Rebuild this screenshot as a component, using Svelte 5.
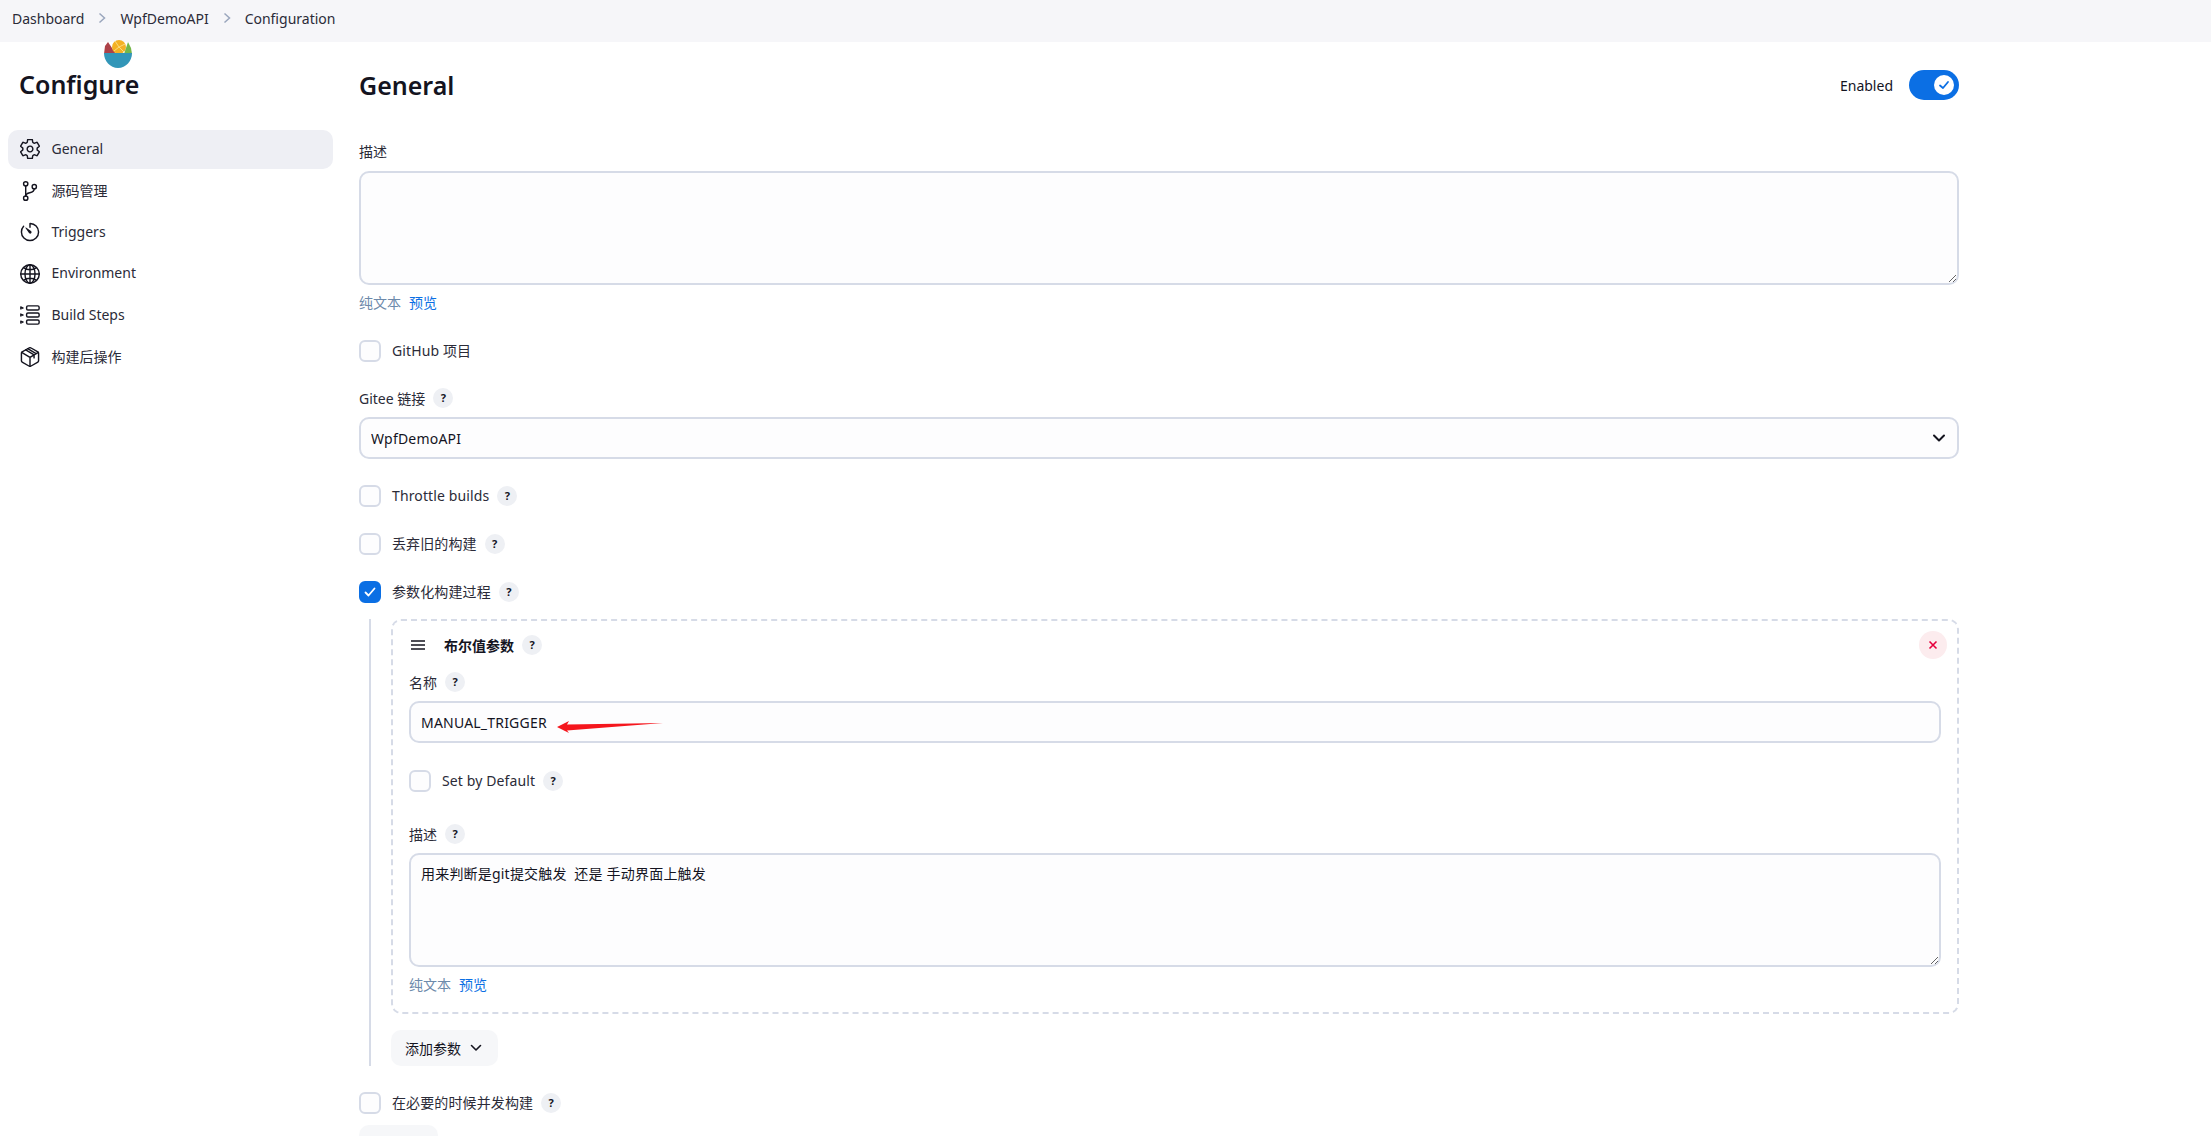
<script>
  const crumbs = ['Dashboard', 'WpfDemoAPI', 'Configuration'];
  const navItems = [
    { label: 'General', icon: 'gear', active: true },
    { label: '源码管理', icon: 'branch' },
    { label: 'Triggers', icon: 'timer' },
    { label: 'Environment', icon: 'globe' },
    { label: 'Build Steps', icon: 'steps' },
    { label: '构建后操作', icon: 'box' }
  ];
</script>

{#snippet help()}
  <span class="help">?</span>
{/snippet}

{#snippet check(label, checked = false, withHelp = true)}
  <div class="check-row">
    <span class="box" class:checked>
      {#if checked}
        <svg viewBox="0 0 22 22" width="22" height="22"><path d="M6.5 11.5l3 3 6-7" fill="none" stroke="#fff" stroke-width="1.8" stroke-linecap="round" stroke-linejoin="round" /></svg>
      {/if}
    </span>
    <span class="check-label">{label}</span>
    {#if withHelp}{@render help()}{/if}
  </div>
{/snippet}

{#snippet editorLinks()}
  <div class="links"><span class="plain">纯文本</span><span class="preview">预览</span></div>
{/snippet}

<div class="page">
  <nav class="crumbs">
    {#each crumbs as crumb, i}
      {#if i > 0}
        <svg class="sep" viewBox="0 0 10 14" width="10" height="14"><path d="M2.5 2.5L7.5 7l-5 4.5" fill="none" stroke="#9aa6bd" stroke-width="1.5" /></svg>
      {/if}
      <span>{crumb}</span>
    {/each}
  </nav>

  <div class="layout">
    <aside class="sidebar">
      <svg class="logo" viewBox="0 0 28 28" width="28" height="28">
        <path d="M0 14L1 6l3-4 8 12z" fill="#ad4148" />
        <circle cx="15" cy="7" r="7" fill="#f4b124" />
        <path d="M15 7L11 1M15 7l6-3M15 7l5 5M15 7l-5 4" stroke="#fbdc7d" stroke-width="1" />
        <path d="M20 14l4-12 3 6 1 6z" fill="#74b749" />
        <path d="M0 13h28c0 8-6 15-14 15S0 21 0 13z" fill="#3296b8" />
      </svg>
      <h1>Configure</h1>
      <ul class="nav">
        {#each navItems as item}
          <li class:active={item.active}>
            <svg class="nav-icon" viewBox="32 32 448 448" width="20" height="20" fill="none" stroke="#14141f" stroke-width="32" stroke-linecap="round" stroke-linejoin="round">
              {#if item.icon === 'gear'}
                <path d="M262.29 192.31a64 64 0 1057.4 57.4 64.13 64.13 0 00-57.4-57.4zM416.39 256a154.34 154.34 0 01-1.53 20.79l45.21 35.46a10.81 10.81 0 012.45 13.75l-42.77 74a10.81 10.81 0 01-13.14 4.59l-44.9-18.08a16.11 16.11 0 00-15.17 1.75A164.48 164.48 0 01325 400.8a15.94 15.94 0 00-8.82 12.14l-6.73 47.89a11.08 11.08 0 01-10.68 9.17h-85.54a11.11 11.11 0 01-10.69-8.87l-6.72-47.82a16.07 16.07 0 00-9-12.22 155.3 155.3 0 01-21.46-12.57 16 16 0 00-15.11-1.71l-44.89 18.07a10.81 10.81 0 01-13.14-4.58l-42.77-74a10.8 10.8 0 012.45-13.75l38.21-30a16.05 16.05 0 006-14.08c-.36-4.17-.58-8.33-.58-12.5s.21-8.27.58-12.35a16 16 0 00-6.07-13.94l-38.19-30A10.81 10.81 0 0149.48 186l42.77-74a10.81 10.81 0 0113.14-4.59l44.9 18.08a16.11 16.11 0 0015.17-1.75A164.48 164.48 0 01187 111.2a15.94 15.94 0 008.82-12.14l6.73-47.89A11.08 11.08 0 01213.23 42h85.54a11.11 11.11 0 0110.69 8.87l6.72 47.82a16.07 16.07 0 009 12.22 155.3 155.3 0 0121.46 12.57 16 16 0 0015.11 1.71l44.89-18.07a10.81 10.81 0 0113.14 4.58l42.77 74a10.8 10.8 0 01-2.45 13.75l-38.21 30a16.05 16.05 0 00-6.05 14.08c.33 4.14.55 8.3.55 12.47z" />
              {:else if item.icon === 'branch'}
                <circle cx="160" cy="96" r="48" /><circle cx="160" cy="416" r="48" /><path d="M160 368V144" /><circle cx="352" cy="160" r="48" /><path d="M352 208c0 128-192 48-192 160" />
              {:else if item.icon === 'timer'}
                <path d="M112.91 128A191.85 191.85 0 0064 254c-1.18 106.35 85.65 193.8 192 194 106.2.2 192-85.83 192-192 0-104.54-83.55-189.61-187.5-192a4.36 4.36 0 00-4.5 4.37V152" /><path d="M233.38 278.63l-79-113a8.13 8.13 0 0111.32-11.32l113 79a32.5 32.5 0 01-37 53.34 33.21 33.21 0 01-9.32-8.02z" fill="#14141f" stroke="none" />
              {:else if item.icon === 'globe'}
                <path d="M256 48C141.13 48 48 141.13 48 256s93.13 208 208 208 208-93.13 208-208S370.87 48 256 48z" /><path d="M256 48c-58.07 0-112.67 93.13-112.67 208S197.93 464 256 464s112.67-93.13 112.67-208S314.07 48 256 48z" /><path d="M117.33 117.33c38.24 27.15 86.38 43.34 138.67 43.34s100.43-16.19 138.67-43.34M394.67 394.67c-38.24-27.15-86.38-43.34-138.67-43.34s-100.43 16.19-138.67 43.34M256 48v416M464 256H48" />
              {:else if item.icon === 'steps'}
                <rect x="180" y="52" width="280" height="92" rx="30" /><rect x="180" y="210" width="280" height="92" rx="30" /><rect x="180" y="368" width="280" height="92" rx="30" /><path d="M48 74l56 24-56 24zM48 232l56 24-56 24zM48 390l56 24-56 24z" stroke-width="26" />
              {:else}
                <path d="M448 341.37V170.61A32 32 0 00432.11 143l-152-88.46a47.94 47.94 0 00-48.24 0L79.89 143A32 32 0 0064 170.61v170.76A32 32 0 0079.89 369l152 88.46a48 48 0 0048.24 0l152-88.46A32 32 0 00448 341.37z" /><path d="M69 153.99l187 110 187-110M256 463.99v-200M160 96l187 110v70M205 70l187 110" />
              {/if}
            </svg>
            <span class="nav-label">{item.label}</span>
          </li>
        {/each}
      </ul>
    </aside>

    <main class="main">
      <header class="section-head">
        <h2>General</h2>
        <div class="toggle-wrap">
          <span>Enabled</span>
          <span class="toggle">
            <span class="knob">
              <svg viewBox="0 0 20 20" width="20" height="20"><path d="M6 10.5l3 2.500 5-6" fill="none" stroke="#0b6fe4" stroke-width="1.8" stroke-linecap="round" stroke-linejoin="round" /></svg>
            </span>
          </span>
        </div>
      </header>

      <div class="field-label desc-top">描述</div>
      <textarea class="area top-area"></textarea>
      {@render editorLinks()}

      <div class="after-links">{@render check('GitHub 项目', false, false)}</div>

      <div class="field-label gitee">Gitee 链接 {@render help()}</div>
      <div class="select-wrap">
        <select class="control">
          <option>WpfDemoAPI</option>
        </select>
        <svg class="chevron" viewBox="0 0 14 10" width="14" height="10"><path d="M2 2.5l5 5 5-5" fill="none" stroke="#14141f" stroke-width="2" stroke-linecap="round" stroke-linejoin="round" /></svg>
      </div>

      <div class="checks">
        {@render check('Throttle builds')}
        {@render check('丢弃旧的构建')}
        {@render check('参数化构建过程', true)}
      </div>

      <section class="nested">
        <div class="param-card">
          <div class="param-head">
            <svg class="drag" viewBox="0 0 16 12" width="16" height="12"><path d="M1 2h14M1 6h14M1 10h14" stroke="#14141f" stroke-width="1.5" /></svg>
            <strong>布尔值参数</strong>
            {@render help()}
            <span class="delete">
              <svg viewBox="0 0 10 10" width="10" height="10"><path d="M1.5 1.5l7 7M8.5 1.5l-7 7" stroke="#e6003c" stroke-width="1.6" /></svg>
            </span>
          </div>

          <div class="field-label name-label">名称 {@render help()}</div>
          <div class="input-wrap">
            <input class="control" type="text" value="MANUAL_TRIGGER" />
            <svg class="arrow" viewBox="0 0 106 12" width="106" height="12"><path d="M0 6L12 0l-2 3.500L106 2 10 9.500 12 12z" fill="#f5161d" /></svg>
          </div>

          <div class="default-row">{@render check('Set by Default')}</div>

          <div class="field-label param-desc">描述 {@render help()}</div>
          <textarea class="area param-area" value="用来判断是git提交触发  还是 手动界面上触发"></textarea>
          {@render editorLinks()}
        </div>
        <button class="add-btn">添加参数
          <svg viewBox="0 0 12 8" width="12" height="8"><path d="M1.500 1.500L6 6l4.500-4.500" fill="none" stroke="#14141f" stroke-width="1.600" stroke-linecap="round" stroke-linejoin="round" /></svg>
        </button>
      </section>

      <div class="concurrent">{@render check('在必要的时候并发构建')}</div>
      <div class="cut-btn"></div>
    </main>
  </div>
</div>

<style>
  :global(html), :global(body) {
    margin: 0;
    overflow: hidden;
  }

  .page {
    height: 1136px;
    overflow: hidden;
    background: #fff;
    color: #14141f;
    font-family: "Noto Sans", "Noto Sans CJK SC", sans-serif;
    font-size: 14px;
  }

  .crumbs {
    height: 42px;
    box-sizing: border-box;
    padding: 0 0 6px 12px;
    display: flex;
    align-items: center;
    gap: 13px;
    background: #f6f6f9;
    color: #2b2b38;
  }

  .layout {
    display: flex;
    position: relative;
  }

  .sidebar {
    width: 325px;
    margin-left: 8px;
    margin-right: 26px;
    position: relative;
  }

  .logo {
    position: absolute;
    left: 96px;
    top: -2px;
  }

  h1, h2 {
    margin: 0;
    font-size: 25px;
    font-weight: 600;
    line-height: 36px;
  }

  h1 {
    padding: 24px 0 0 11px;
  }

  h2 {
    margin-top: -1px;
  }

  .nav {
    list-style: none;
    margin: 28px 0 0;
    padding: 0;
  }

  .nav li {
    height: 39px;
    box-sizing: border-box;
    margin-bottom: 2.600px;
    padding-bottom: 1px;
    border-radius: 10px;
    display: flex;
    align-items: center;
    gap: 11.500px;
    padding-left: 12px;
    color: #2b2b38;
  }

  .nav-label {
    margin-bottom: 2px;
  }

  .nav li.active {
    background: #eeeff4;
  }

  .main {
    width: 1600px;
  }

  .section-head {
    display: flex;
    justify-content: space-between;
    align-items: center;
    padding-top: 25px;
    height: 36px;
  }

  .toggle-wrap {
    display: flex;
    align-items: center;
    gap: 16px;
  }

  .toggle {
    width: 50px;
    height: 30px;
    border-radius: 15px;
    background: #0b6fe4;
    display: flex;
    align-items: center;
    justify-content: flex-end;
    padding-right: 5px;
    box-sizing: border-box;
  }

  .knob {
    width: 20px;
    height: 20px;
    border-radius: 50%;
    background: #fff;
    display: flex;
  }

  .field-label {
    display: flex;
    align-items: center;
    gap: 6px;
    height: 20px;
    color: #2b2b38;
  }

  .desc-top {
    margin-top: 38px;
  }

  .area, .control {
    display: block;
    width: 100%;
    box-sizing: border-box;
    border: 2px solid #d6dbe7;
    border-radius: 10px;
    background: #fdfdfe;
    color: #14141f;
    font: inherit;
    letter-spacing: 0.2px;
    padding: 0 10px;
    outline: none;
  }

  .area {
    padding-top: 8px;
  }

  .top-area {
    height: 114px;
    margin-top: 10px;
  }

  .links {
    display: flex;
    gap: 8px;
    margin-top: 8px;
    height: 20px;
    line-height: 20px;
  }

  .plain {
    color: #6d8aab;
  }

  .preview {
    color: #0b6fe4;
  }

  .after-links {
    margin-top: 27px;
  }

  .check-row {
    display: flex;
    align-items: center;
    height: 22px;
    color: #2b2b38;
  }

  .check-label {
    margin-bottom: 2px;
    letter-spacing: 0.12px;
  }

  .box {
    width: 22px;
    height: 22px;
    box-sizing: border-box;
    border: 2px solid #d6dbe7;
    border-radius: 6px;
    background: #fdfdfe;
    margin-right: 11px;
    flex: none;
    display: block;
    position: relative;
  }

  .box.checked {
    background: #0b6fe4;
    border-color: #0b6fe4;
  }

  .box.checked svg {
    position: absolute;
    left: -2px;
    top: -2px;
  }

  .help {
    width: 20px;
    height: 20px;
    margin-left: 8px;
    border-radius: 50%;
    background: #eef0f4;
    color: #14141f;
    font-size: 11px;
    font-weight: 700;
    line-height: 20px;
    text-align: center;
    flex: none;
  }

  .field-label .help {
    margin-left: 2px;
  }

  .gitee {
    margin-top: 26px;
  }

  .select-wrap, .input-wrap {
    position: relative;
    margin-top: 9px;
  }

  .control {
    height: 42px;
    appearance: none;
  }

  .chevron {
    position: absolute;
    right: 13px;
    top: 16px;
  }

  .checks {
    margin-top: 26px;
    display: flex;
    flex-direction: column;
    gap: 26px;
  }

  .nested {
    margin: 16px 0 0 10px;
    padding-left: 20px;
    border-left: 2px solid #d6dbe7;
    height: 447px;
    box-sizing: border-box;
  }

  .param-card {
    border: 2px dashed #d6dbe7;
    border-radius: 10px;
    height: 395px;
    box-sizing: border-box;
    padding: 0 16px 0 16px;
  }

  .param-head {
    display: flex;
    align-items: center;
    height: 28px;
    margin-top: 10px;
  }

  .drag {
    margin: 0 18px 0 1px;
  }

  .param-head strong {
    font-weight: 700;
    color: #14141f;
  }

  .delete {
    margin-left: auto;
    margin-right: -6px;
    width: 28px;
    height: 28px;
    border-radius: 50%;
    background: #fcecee;
    display: flex;
    align-items: center;
    justify-content: center;
  }

  .name-label {
    margin-top: 13px;
  }

  .arrow {
    position: absolute;
    left: 148px;
    top: 20px;
  }

  .default-row {
    margin-top: 27px;
  }

  .param-desc {
    margin-top: 32px;
  }

  .param-area {
    height: 114px;
    margin-top: 9px;
  }

  .add-btn {
    display: flex;
    align-items: center;
    gap: 9px;
    width: 107px;
    height: 36px;
    margin-top: 16px;
    padding: 0 0 0 14px;
    border: none;
    border-radius: 10px;
    background: #f6f7f9;
    color: #14141f;
    font: inherit;
  }

  .concurrent {
    margin-top: 26px;
  }

  .cut-btn {
    width: 79px;
    height: 36px;
    margin-top: 11px;
    border-radius: 10px;
    background: #f6f7f9;
  }
</style>
